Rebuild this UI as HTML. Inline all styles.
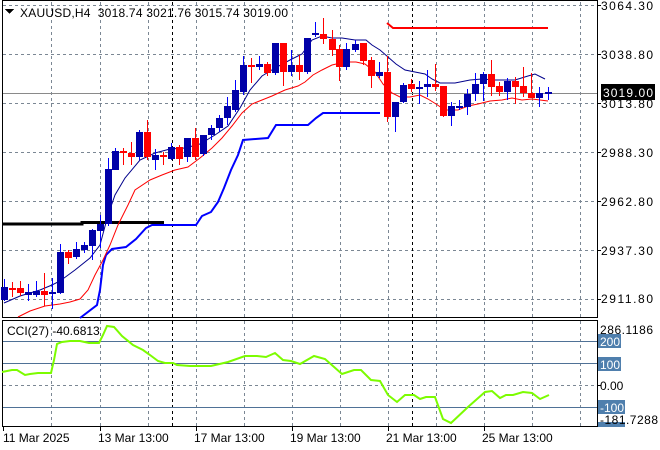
<!DOCTYPE html>
<html><head><meta charset="utf-8"><style>
html,body{margin:0;padding:0;background:#fff;width:660px;height:450px;overflow:hidden}
svg{display:block}
text{font-family:"Liberation Sans",sans-serif;font-size:12px;fill:#000}
</style></head><body>
<svg width="660" height="450" viewBox="0 0 660 450" xmlns="http://www.w3.org/2000/svg" shape-rendering="crispEdges">
<rect width="660" height="450" fill="#fff"/>
<g stroke="#7b8794" stroke-width="1" stroke-dasharray="3,3">
<path d="M3 5.5H597M3 54.5H597M3 103.5H597M3 152.5H597M3 201.5H597M3 250.5H597M3 299.5H597"/>
<path d="M51.5 2V317M100.5 2V317M148.5 2V317M196.5 2V317M244.5 2V317M292.5 2V317M340.5 2V317M388.5 2V317M436.5 2V317M484.5 2V317M532.5 2V317M580.5 2V317"/>
<path d="M51.5 321V426M100.5 321V426M148.5 321V426M196.5 321V426M244.5 321V426M292.5 321V426M340.5 321V426M388.5 321V426M436.5 321V426M484.5 321V426M532.5 321V426M580.5 321V426"/>
<path d="M3 385.5H597"/>
</g>
<g stroke="#000" stroke-dasharray="3,3"><path d="M172.5 2V317M412.5 2V317M172.5 321V426M412.5 321V426"/></g>
<g stroke="#4f7196"><path d="M3 341.5H597M3 363.5H597M3 407.5H597"/></g>
<path d="M3 93.5H597" stroke="#8a8a8a"/>
<g fill="none" stroke="#000"><rect x="2.5" y="0.5" width="595" height="317"/><rect x="2.5" y="320.5" width="595" height="106"/></g>
<g stroke="#000"><path d="M597 5.5h4M597 54.5h4M597 103.5h4M597 152.5h4M597 201.5h4M597 250.5h4M597 299.5h4M597 341.5h4M597 363.5h4M597 385.5h4M597 407.5h4"/>
<path d="M3.5 427v4M100.5 427v4M196.5 427v4M292.5 427v4M388.5 427v4M484.5 427v4"/></g>
<g shape-rendering="auto">
<path d="M2 224H82V222.5H164" stroke="#000" stroke-width="3" fill="none"/>
<polyline fill="none" stroke="#0000ff" stroke-width="2" points="80,318 97,305 100,290 103,265 106,255 112,249 126,247 136,239 146,228 152,225 196,225 202,216 211,212 218,202 224,188 231,170 238,155 243,140 268,138 276,125 308,125 316,118 323,113 380,113"/>
<polyline fill="none" stroke="#ff0000" stroke-width="2" points="387,23 393,28 548,28"/>
<polyline fill="none" stroke="#00008b" stroke-width="1" points="4,303 20,296 40,290 52,285 60,281 75,270 90,258 100,245 108,215 115,195 125,178 140,160 155,153 170,149 185,148 200,144 215,135 228,126 240,108 250,90 262,76 275,68 290,60 302,54 312,40 322,36 332,38 342,38 355,40 366,40 372,45 380,50 388,57 396,64 405,70 415,72 425,74 432,79 440,83 455,83 470,80 482,79 495,80 505,80 515,80 528,76 535,74 545,79"/>
<polyline fill="none" stroke="#ff0000" stroke-width="1" points="18,317 30,311 45,306 60,304 70,302 80,299 88,290 95,275 103,260 110,245 118,225 128,205 135,190 150,180 162,175 175,170 188,167 200,158 212,148 222,138 232,126 242,113 252,104 262,100 272,96 285,90 298,86 305,82 313,75 322,70 332,65 345,62 356,62 365,64 375,72 383,84 392,93 400,97 410,97 420,95 428,99 436,104 445,110 458,110 468,106 478,104 490,101 502,100 512,98 522,100 532,99 548,101"/>
<polyline fill="none" stroke="#7cfc00" stroke-width="2" points="2,372 12,370 17,370 25,375 30,374 38,373 51,373 54,360 57,344 62,342 70,341 80,341 89,343 99,343 103,335 107,326 114,327 122,336 133,345 143,350 150,355 158,361 165,363 173,363 177,365 190,366 211,366 228,362 245,356 257,356 266,357 275,353 283,360 291,361 300,364 314,356 325,359 342,374 354,370 361,370 371,380 380,381 388,395 397,402 405,395 414,395 420,399 426,397 435,397 443,419 451,423 468,407 485,392 492,391 500,398 506,395 513,395 523,392 532,393 540,399 549,395"/>
</g>
<path stroke="#0000ff" fill="none" d="M4.5 279V301M28.5 284V301M36.5 281V297M52.5 278V309M60.5 244V294M76.5 242V259M84.5 242V253M92.5 229V260M100.5 215V248M108.5 158V226M115.5 148V170M139.5 130V160M155.5 149V170M171.5 143V160M187.5 138V162M203.5 135V156M211.5 125V140M219.5 115V132M227.5 97V125M235.5 80V112M243.5 56V95M259.5 56V70M275.5 43V75M291.5 50V76M307.5 38V74M315.5 22V37M346.5 43V70M355.5 40V52M379.5 62V78M395.5 102V132M403.5 83V103M419.5 81V104M427.5 70V97M451.5 102V126M459.5 100V110M467.5 89V115M475.5 73V101M483.5 72V101M507.5 78V100M539.5 87V107M548.5 87V100"/>
<path fill="#0000a8" d="M1 287h7V300h-7zM25 292h7V295h-7zM33 291h7V295h-7zM49 292h7V294h-7zM57 252h7V293h-7zM73 249h7V257h-7zM81 245h7V250h-7zM89 230h7V246h-7zM97 224h7V231h-7zM105 169h7V224h-7zM112 151h7V170h-7zM136 132h7V157h-7zM152 155h7V160h-7zM168 147h7V159h-7zM184 138h7V157h-7zM200 135h7V154h-7zM208 128h7V135h-7zM216 118h7V128h-7zM224 106h7V118h-7zM232 90h7V110h-7zM240 65h7V92h-7zM256 64h7V67h-7zM272 43h7V73h-7zM288 65h7V72h-7zM304 38h7V72h-7zM312 33h7V35h-7zM343 49h7V67h-7zM352 44h7V50h-7zM376 72h7V76h-7zM392 102h7V117h-7zM400 85h7V102h-7zM416 87h7V89h-7zM424 84h7V87h-7zM448 106h7V116h-7zM456 106h7V108h-7zM464 94h7V107h-7zM472 84h7V94h-7zM480 74h7V84h-7zM504 81h7V92h-7zM536 93h7V98h-7zM545 92h7V94h-7z"/>
<path stroke="#ff0000" fill="none" d="M12.5 282V297M20.5 281V296M44.5 273V306M68.5 250V264M123.5 148V165M131.5 142V165M147.5 120V160M163.5 152V165M179.5 145V165M195.5 128V160M251.5 58V83M267.5 62V76M283.5 43V86M299.5 55V80M323.5 18V44M332.5 30V56M339.5 45V81M363.5 43V65M371.5 57V88M387.5 56V122M411.5 79V92M435.5 64V91M443.5 86V117M491.5 60V96M499.5 82V96M515.5 77V104M523.5 67V97M531.5 73V98"/>
<path fill="#ff0000" d="M9 288h7V290h-7zM17 288h7V293h-7zM41 291h7V295h-7zM65 252h7V258h-7zM120 151h7V153h-7zM128 153h7V157h-7zM144 132h7V157h-7zM160 155h7V157h-7zM176 147h7V159h-7zM192 138h7V157h-7zM248 65h7V67h-7zM264 64h7V73h-7zM280 43h7V72h-7zM296 65h7V72h-7zM320 34h7V39h-7zM329 39h7V50h-7zM336 49h7V67h-7zM360 43h7V61h-7zM368 60h7V76h-7zM384 72h7V117h-7zM408 84h7V89h-7zM432 84h7V87h-7zM440 86h7V116h-7zM488 74h7V87h-7zM496 86h7V92h-7zM512 81h7V87h-7zM520 86h7V93h-7zM528 93h7V98h-7z"/>
<path d="M5 9h9l-4.5 5z" fill="#000"/>
<text x="20" y="17" textLength="268" lengthAdjust="spacing" xml:space="preserve">XAUUSD,H4  3018.74 3021.76 3015.74 3019.00</text>
<g>
<text x="601" y="10" textLength="52">3064.30</text>
<text x="601" y="59" textLength="52">3038.80</text>
<text x="601" y="108" textLength="52">3013.80</text>
<text x="601" y="157" textLength="52">2988.30</text>
<text x="601" y="206" textLength="52">2962.80</text>
<text x="601" y="255" textLength="52">2937.30</text>
<text x="601" y="303" textLength="52">2911.80</text>
</g>
<rect x="601" y="84" width="54" height="16" fill="#000"/>
<text x="603" y="97" textLength="50" style="fill:#fff">3019.00</text>
<text x="600" y="334" textLength="53">286.1186</text>
<rect x="598" y="334" width="23" height="14" fill="#4f7fad"/>
<text x="600" y="346" style="fill:#fff">200</text>
<rect x="598" y="357" width="23" height="14" fill="#4f7fad"/>
<text x="600" y="369" style="fill:#fff">100</text>
<text x="600" y="390">0.00</text>
<rect x="598" y="400" width="27" height="14" fill="#4f7fad"/>
<text x="600" y="412" style="fill:#fff">-100</text>
<rect x="598" y="422" width="27" height="5" fill="#4f7fad"/>
<text x="600" y="424" textLength="58">-181.7288</text>
<text x="7" y="335">CCI(27) -40.6813</text>
<text x="3" y="442">11 Mar 2025</text>
<text x="98" y="442">13 Mar 13:00</text>
<text x="194" y="442">17 Mar 13:00</text>
<text x="290" y="442">19 Mar 13:00</text>
<text x="386" y="442">21 Mar 13:00</text>
<text x="482" y="442">25 Mar 13:00</text>
</svg>
</body></html>
